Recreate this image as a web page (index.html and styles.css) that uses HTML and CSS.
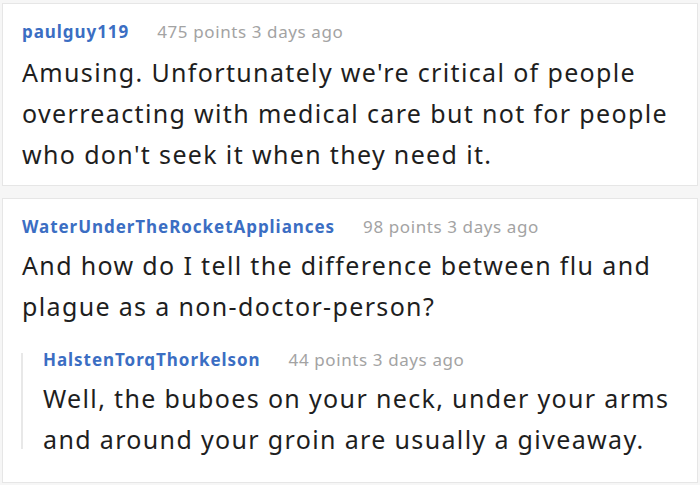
FILE: index.html
```html
<!DOCTYPE html>
<html>
<head>
<meta charset="utf-8">
<link rel="stylesheet" href="styles.css">
</head>
<body>
<div class="thread">
  <div class="comment">
    <div class="meta"><span class="user">paulguy119</span><span class="info">475 points 3 days ago</span></div>
    <p class="text">Amusing. Unfortunately we're critical of people overreacting with medical care but not for people who don't seek it when they need it.</p>
  </div>
  <div class="comment">
    <div class="meta"><span class="user">WaterUnderTheRocketAppliances</span><span class="info">98 points 3 days ago</span></div>
    <p class="text">And how do I tell the difference between flu and plague as a non-doctor-person?</p>
    <div class="reply">
      <div class="meta"><span class="user">HalstenTorqThorkelson</span><span class="info">44 points 3 days ago</span></div>
      <p class="text">Well, the buboes on your neck, under your arms and around your groin are usually a giveaway.</p>
    </div>
  </div>
</div>
</body>
</html>
```
FILE: styles.css
```css
html, body {
  margin: 0;
  padding: 0;
  background: #f6f6f6;
}
body {
  font-family: "Noto Sans", "Open Sans", sans-serif;
  color: #1e1e1e;
  width: 700px;
  height: 485px;
  overflow: hidden;
}
.thread {
  display: flex;
  flex-direction: column;
  gap: 12px;
  padding: 3px 2px 0 2px;
}
.comment {
  background: #fff;
  border: 1px solid #e6e6e6;
  padding: 17px 19px 10px 19px;
}
.meta {
  display: flex;
  align-items: baseline;
  gap: 28px;
  font-size: 17px;
  line-height: 22px;
  letter-spacing: 0.6px;
  margin-bottom: 9px;
}
.user {
  color: #3b6ec3;
  font-weight: 700;
  letter-spacing: 0.95px;
}
.info {
  color: #a3a3a3;
}
.text {
  margin: 0;
  font-size: 25px;
  line-height: 41px;
  letter-spacing: 1.35px;
}
.comment + .comment .meta:first-child {
  margin-bottom: 7px;
}
.reply {
  position: relative;
  margin: 22px 0 12px -1px;
  padding-left: 22px;
}
.reply::before {
  content: "";
  position: absolute;
  left: 0;
  top: 4px;
  bottom: 11px;
  width: 2px;
  background: #e8e8e8;
}
```
